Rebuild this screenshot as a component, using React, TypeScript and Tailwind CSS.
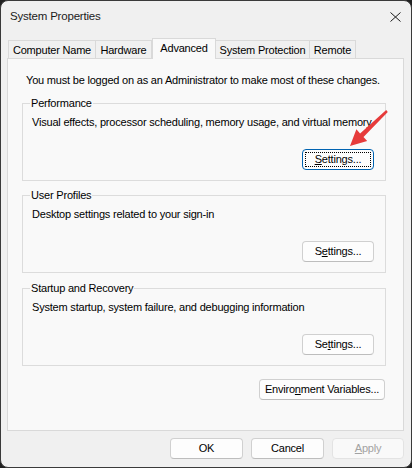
import React from 'react';

const TABS = [
  { label: 'Computer Name', w: 'w-[88px]' },
  { label: 'Hardware', w: 'w-[57px]' },
  { label: 'Advanced', w: 'w-[64px]', active: true },
  { label: 'System Protection', w: 'w-[95px]' },
  { label: 'Remote', w: 'w-[47px]' },
];

type BtnProps = {
  children: React.ReactNode;
  width: string;
  focused?: boolean;
  disabled?: boolean;
};

const Btn: React.FC<BtnProps> = ({ children, width, focused, disabled }) => (
  <button
    className={`relative h-[21px] ${width} rounded-[4px] border text-[11px] leading-none flex items-center justify-center ${
      focused
        ? 'border-[#0063b1] bg-[#fdfdfd] text-black'
        : disabled
        ? 'border-[#e3e3e3] bg-[#f9f9f9] text-[#a2a2a2]'
        : 'border-[#d0d0d0] border-b-[#bdbdbd] bg-[#fdfdfd] text-black'
    }`}
  >
    {focused && <span className="absolute inset-[2px] border border-dotted border-black" />}
    {children}
  </button>
);

const Group: React.FC<{
  title: string;
  desc: string;
  focused?: boolean;
  className?: string;
  children: React.ReactNode;
}> = ({ title, desc, focused, className = '', children }) => (
  <fieldset className={`border border-[#dcdcdc] pl-[8px] pr-[11px] pt-[5px] pb-[10px] ${className}`}>
    <legend className="-ml-[1px] px-[1px] leading-[14px]">{title}</legend>
    <div className="ml-[1px] leading-[14px]">{desc}</div>
    <div className="mt-[20px] flex justify-end">
      <Btn width="w-[72px]" focused={focused}>
        {children}
      </Btn>
    </div>
  </fieldset>
);

export default function App() {
  return (
    <div className="w-[412px] h-[468px] bg-[#202020] font-['Liberation_Sans',Arial,sans-serif] text-[11px] tracking-[-0.2px] text-black">
      <div className="relative h-full flex flex-col rounded-[8px] border border-[#3a3a3a] bg-[#f0f0f0] overflow-hidden">
        {/* title bar */}
        <div className="h-[31px] flex items-center justify-between pl-[9px] pr-[10px] pt-[1px]">
          <span className="text-[11.5px] text-[#1b1b1b]">System Properties</span>
          <svg width="11" height="10" viewBox="0 0 11 10" className="mt-[-1px]">
            <path d="M0.5 0.5 L10.5 9.5 M10.5 0.5 L0.5 9.5" stroke="#1b1b1b" strokeWidth="1" fill="none" />
          </svg>
        </div>

        {/* tabs */}
        <div className="mt-[6px] h-[20px] flex items-end pl-[7px]">
          {TABS.map((t) =>
            t.active ? (
              <div
                key={t.label}
                className={`relative z-10 -mb-px h-[21px] ${t.w} border border-b-0 border-[#d9d9d9] bg-[#f9f9f9] flex items-center justify-center pb-[1px]`}
              >
                {t.label}
              </div>
            ) : (
              <div
                key={t.label}
                className={`h-[18px] ${t.w} -ml-px first:ml-0 border border-b-0 border-[#d9d9d9] bg-[#f0f0f0] flex items-center justify-center pt-[2px]`}
              >
                {t.label}
              </div>
            )
          )}
        </div>

        {/* panel */}
        <div className="ml-[6px] mr-[7px] h-[373px] border border-[#d9d9d9] bg-[#f9f9f9] pt-[14px] pl-[14px] pr-[17px]">
          <div className="ml-[4px] leading-[14px]">
            You must be logged on as an Administrator to make most of these changes.
          </div>

          <div className="mt-[9px] flex flex-col gap-[7px]">
            <Group
              title="Performance"
              desc="Visual effects, processor scheduling, memory usage, and virtual memory"
              focused
            >
              <u>S</u>ettings...
            </Group>
            <Group title="User Profiles" desc="Desktop settings related to your sign-in">
              S<u>e</u>ttings...
            </Group>
            <Group
              title="Startup and Recovery"
              desc="System startup, system failure, and debugging information"
              className="mt-[1px]"
            >
              Se<u>t</u>tings...
            </Group>
          </div>

          <div className="mt-[13px] flex justify-end pr-[1px]">
            <Btn width="w-[126px]">
              Enviro<u>n</u>ment Variables...
            </Btn>
          </div>
        </div>

        {/* bottom buttons */}
        <div className="mt-[7px] flex justify-end gap-[8px] pr-[7px]">
          <Btn width="w-[73px]">OK</Btn>
          <Btn width="w-[73px]">Cancel</Btn>
          <Btn width="w-[72px]" disabled>
            <u>A</u>pply
          </Btn>
        </div>

        {/* annotation arrow */}
        <svg
          className="absolute left-[-1px] top-[-1px] pointer-events-none"
          width="412"
          height="468"
          viewBox="0 0 412 468"
        >
          <polygon
            points="386.2,110.1 360.1,133.4 356.4,129.3 350,146 367.2,141.1 363.5,137 387.8,111.9"
            fill="#e63b3b"
          />
        </svg>
      </div>
    </div>
  );
}
